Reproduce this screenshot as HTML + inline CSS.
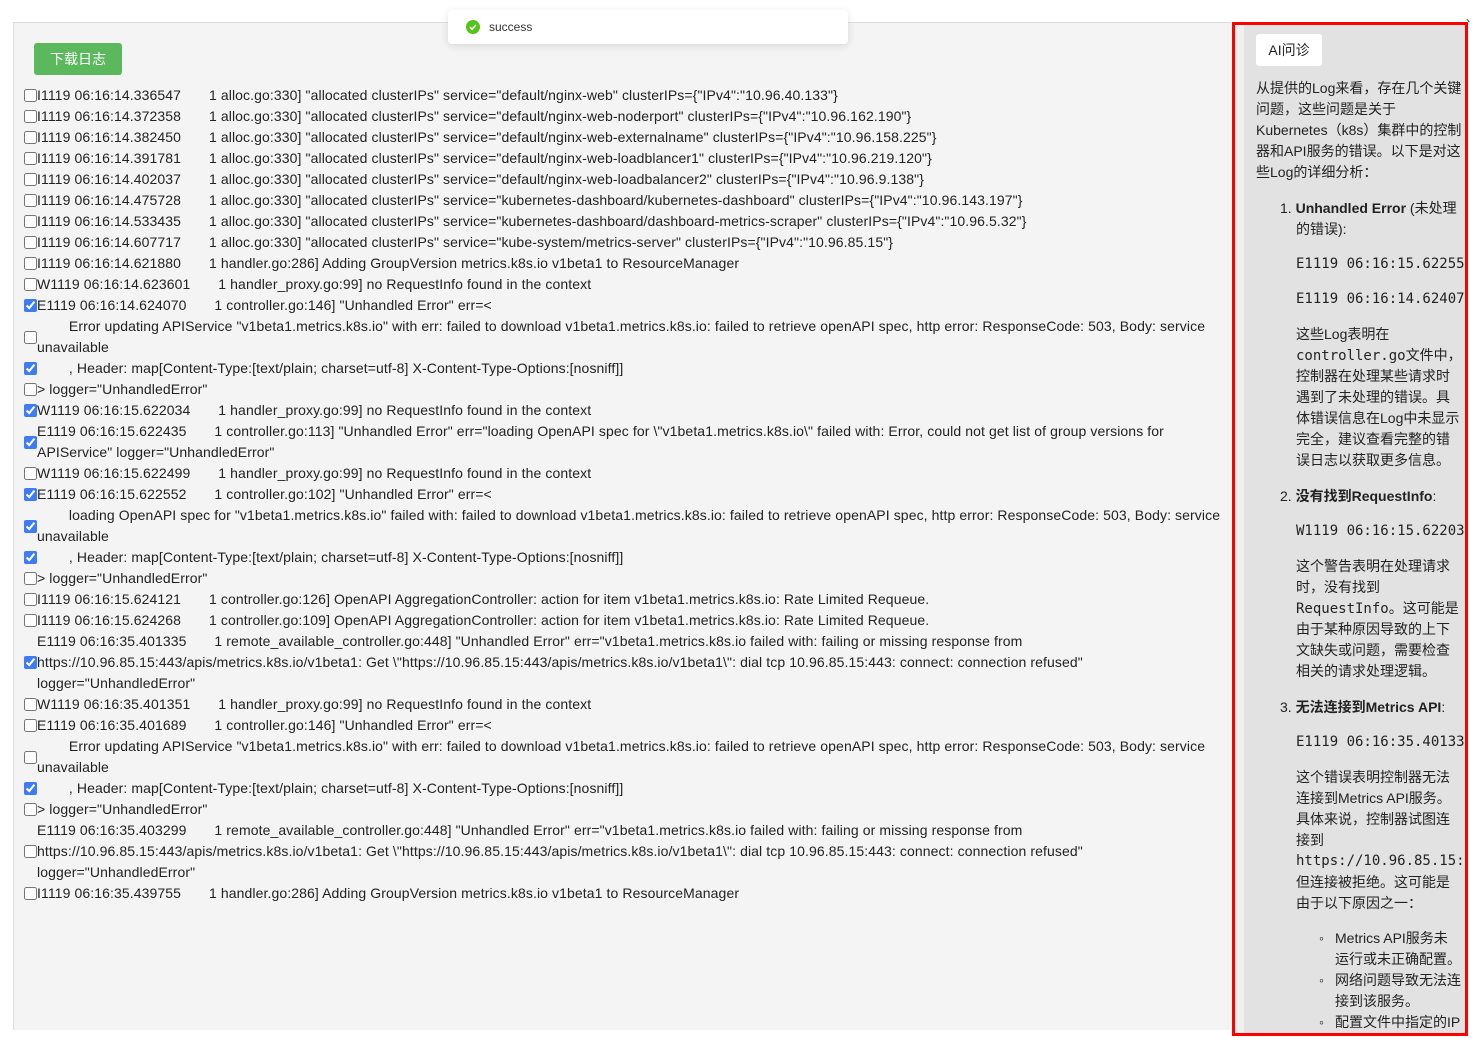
<!DOCTYPE html>
<html><head><meta charset="utf-8"><style>
*{margin:0;padding:0;box-sizing:border-box}
body{width:1475px;height:1038px;background:#fff;position:relative;overflow:hidden;font-family:"Liberation Sans","Noto Sans CJK SC",sans-serif;font-size:14px;color:#222}
#main{position:absolute;left:13px;top:22px;width:1218px;height:1008px;background:#f4f4f4;border-left:1px solid #ddd;border-top:1px solid #ddd}
#btn{position:absolute;left:34px;top:43px;width:88px;height:32px;background:#5cb85c;color:#fff;border-radius:3px;font-size:14px;line-height:32px;text-align:center}
#logs{position:absolute;left:24px;top:85px;width:1200px;letter-spacing:0.1px}
.r{display:flex;align-items:center;line-height:21px;white-space:pre}
.r input{width:13px;height:13px;margin:0;flex:none;accent-color:#3d7cf4}
#toast{position:absolute;left:448px;top:10px;width:400px;height:34px;background:#fff;border-radius:4px;box-shadow:0 2px 8px rgba(0,0,0,.12);font-size:12px;color:#333;line-height:34px;padding-left:41px}
#toast i{position:absolute;left:18px;top:10px;width:14px;height:14px;border-radius:50%;background:#52c41a;display:block}
#toast svg{display:block}
#right{position:absolute;left:1232px;top:22px;width:239px;height:1014px;border:3px solid #f00;background:#e2e2e2;overflow:hidden}
#right .strip{position:absolute;left:0;top:0;width:9px;height:100%;background:#f0f0f0}
#ai{position:absolute;left:21px;top:9px;width:66px;height:32px;background:#fff;border-radius:3px;line-height:32px;text-align:center;font-size:14px}
.l{position:absolute;line-height:21px;white-space:nowrap;font-size:14px}
.m{font-family:"DejaVu Sans Mono","Liberation Mono","Noto Sans CJK SC",monospace;font-size:14px}
</style></head><body>
<div id="main"></div>
<div id="btn">下载日志</div>
<div id="toast"><i><svg width="14" height="14" viewBox="0 0 14 14"><path d="M4 7.2l2 2 4-4.2" stroke="#fff" stroke-width="1.6" fill="none"/></svg></i>success</div>
<div style="position:absolute;left:1466px;top:14px;font-size:12px">›</div>
<div id="logs">
<div class="r"><input type="checkbox"><span>I1119 06:16:14.336547       1 alloc.go:330] "allocated clusterIPs" service="default/nginx-web" clusterIPs={"IPv4":"10.96.40.133"}</span></div>
<div class="r"><input type="checkbox"><span>I1119 06:16:14.372358       1 alloc.go:330] "allocated clusterIPs" service="default/nginx-web-noderport" clusterIPs={"IPv4":"10.96.162.190"}</span></div>
<div class="r"><input type="checkbox"><span>I1119 06:16:14.382450       1 alloc.go:330] "allocated clusterIPs" service="default/nginx-web-externalname" clusterIPs={"IPv4":"10.96.158.225"}</span></div>
<div class="r"><input type="checkbox"><span>I1119 06:16:14.391781       1 alloc.go:330] "allocated clusterIPs" service="default/nginx-web-loadblancer1" clusterIPs={"IPv4":"10.96.219.120"}</span></div>
<div class="r"><input type="checkbox"><span>I1119 06:16:14.402037       1 alloc.go:330] "allocated clusterIPs" service="default/nginx-web-loadbalancer2" clusterIPs={"IPv4":"10.96.9.138"}</span></div>
<div class="r"><input type="checkbox"><span>I1119 06:16:14.475728       1 alloc.go:330] "allocated clusterIPs" service="kubernetes-dashboard/kubernetes-dashboard" clusterIPs={"IPv4":"10.96.143.197"}</span></div>
<div class="r"><input type="checkbox"><span>I1119 06:16:14.533435       1 alloc.go:330] "allocated clusterIPs" service="kubernetes-dashboard/dashboard-metrics-scraper" clusterIPs={"IPv4":"10.96.5.32"}</span></div>
<div class="r"><input type="checkbox"><span>I1119 06:16:14.607717       1 alloc.go:330] "allocated clusterIPs" service="kube-system/metrics-server" clusterIPs={"IPv4":"10.96.85.15"}</span></div>
<div class="r"><input type="checkbox"><span>I1119 06:16:14.621880       1 handler.go:286] Adding GroupVersion metrics.k8s.io v1beta1 to ResourceManager</span></div>
<div class="r"><input type="checkbox"><span>W1119 06:16:14.623601       1 handler_proxy.go:99] no RequestInfo found in the context</span></div>
<div class="r"><input type="checkbox" checked><span>E1119 06:16:14.624070       1 controller.go:146] "Unhandled Error" err=&lt;</span></div>
<div class="r"><input type="checkbox"><span>        Error updating APIService "v1beta1.metrics.k8s.io" with err: failed to download v1beta1.metrics.k8s.io: failed to retrieve openAPI spec, http error: ResponseCode: 503, Body: service<br>unavailable</span></div>
<div class="r"><input type="checkbox" checked><span>        , Header: map[Content-Type:[text/plain; charset=utf-8] X-Content-Type-Options:[nosniff]]</span></div>
<div class="r"><input type="checkbox"><span>&gt; logger="UnhandledError"</span></div>
<div class="r"><input type="checkbox" checked><span>W1119 06:16:15.622034       1 handler_proxy.go:99] no RequestInfo found in the context</span></div>
<div class="r"><input type="checkbox" checked><span>E1119 06:16:15.622435       1 controller.go:113] "Unhandled Error" err="loading OpenAPI spec for \"v1beta1.metrics.k8s.io\" failed with: Error, could not get list of group versions for<br>APIService" logger="UnhandledError"</span></div>
<div class="r"><input type="checkbox"><span>W1119 06:16:15.622499       1 handler_proxy.go:99] no RequestInfo found in the context</span></div>
<div class="r"><input type="checkbox" checked><span>E1119 06:16:15.622552       1 controller.go:102] "Unhandled Error" err=&lt;</span></div>
<div class="r"><input type="checkbox" checked><span>        loading OpenAPI spec for "v1beta1.metrics.k8s.io" failed with: failed to download v1beta1.metrics.k8s.io: failed to retrieve openAPI spec, http error: ResponseCode: 503, Body: service<br>unavailable</span></div>
<div class="r"><input type="checkbox" checked><span>        , Header: map[Content-Type:[text/plain; charset=utf-8] X-Content-Type-Options:[nosniff]]</span></div>
<div class="r"><input type="checkbox"><span>&gt; logger="UnhandledError"</span></div>
<div class="r"><input type="checkbox"><span>I1119 06:16:15.624121       1 controller.go:126] OpenAPI AggregationController: action for item v1beta1.metrics.k8s.io: Rate Limited Requeue.</span></div>
<div class="r"><input type="checkbox"><span>I1119 06:16:15.624268       1 controller.go:109] OpenAPI AggregationController: action for item v1beta1.metrics.k8s.io: Rate Limited Requeue.</span></div>
<div class="r"><input type="checkbox" checked><span>E1119 06:16:35.401335       1 remote_available_controller.go:448] "Unhandled Error" err="v1beta1.metrics.k8s.io failed with: failing or missing response from<br>https://10.96.85.15:443/apis/metrics.k8s.io/v1beta1: Get \"https://10.96.85.15:443/apis/metrics.k8s.io/v1beta1\": dial tcp 10.96.85.15:443: connect: connection refused"<br>logger="UnhandledError"</span></div>
<div class="r"><input type="checkbox"><span>W1119 06:16:35.401351       1 handler_proxy.go:99] no RequestInfo found in the context</span></div>
<div class="r"><input type="checkbox"><span>E1119 06:16:35.401689       1 controller.go:146] "Unhandled Error" err=&lt;</span></div>
<div class="r"><input type="checkbox"><span>        Error updating APIService "v1beta1.metrics.k8s.io" with err: failed to download v1beta1.metrics.k8s.io: failed to retrieve openAPI spec, http error: ResponseCode: 503, Body: service<br>unavailable</span></div>
<div class="r"><input type="checkbox" checked><span>        , Header: map[Content-Type:[text/plain; charset=utf-8] X-Content-Type-Options:[nosniff]]</span></div>
<div class="r"><input type="checkbox"><span>&gt; logger="UnhandledError"</span></div>
<div class="r"><input type="checkbox"><span>E1119 06:16:35.403299       1 remote_available_controller.go:448] "Unhandled Error" err="v1beta1.metrics.k8s.io failed with: failing or missing response from<br>https://10.96.85.15:443/apis/metrics.k8s.io/v1beta1: Get \"https://10.96.85.15:443/apis/metrics.k8s.io/v1beta1\": dial tcp 10.96.85.15:443: connect: connection refused"<br>logger="UnhandledError"</span></div>
<div class="r"><input type="checkbox"><span>I1119 06:16:35.439755       1 handler.go:286] Adding GroupVersion metrics.k8s.io v1beta1 to ResourceManager</span></div>
</div>
<div id="right"><div class="strip"></div><div id="ai">AI问诊</div></div>
<div style="position:absolute;left:0;top:0;">
<div class="l" style="left:1256px;top:78px">从提供的Log来看，存在几个关键</div>
<div class="l" style="left:1256px;top:99px">问题，这些问题是关于</div>
<div class="l" style="left:1256px;top:120px">Kubernetes（k8s）集群中的控制</div>
<div class="l" style="left:1256px;top:141px">器和API服务的错误。以下是对这</div>
<div class="l" style="left:1256px;top:162px">些Log的详细分析：</div>
<div class="l" style="left:1280px;top:198px">1. <b>Unhandled Error</b> (未处理</div>
<div class="l" style="left:1296px;top:219px">的错误):</div>
<div class="l m" style="left:1296px;top:254px">E1119 06:16:15.622552</div>
<div class="l m" style="left:1296px;top:289px">E1119 06:16:14.624070</div>
<div class="l" style="left:1296px;top:324px">这些Log表明在</div>
<div class="l" style="left:1296px;top:345px"><span class="m">controller.go</span>文件中，</div>
<div class="l" style="left:1296px;top:366px">控制器在处理某些请求时</div>
<div class="l" style="left:1296px;top:387px">遇到了未处理的错误。具</div>
<div class="l" style="left:1296px;top:408px">体错误信息在Log中未显示</div>
<div class="l" style="left:1296px;top:429px">完全，建议查看完整的错</div>
<div class="l" style="left:1296px;top:450px">误日志以获取更多信息。</div>
<div class="l" style="left:1280px;top:486px">2. <b>没有找到RequestInfo</b>:</div>
<div class="l m" style="left:1296px;top:521px">W1119 06:16:15.622034</div>
<div class="l" style="left:1296px;top:556px">这个警告表明在处理请求</div>
<div class="l" style="left:1296px;top:577px">时，没有找到</div>
<div class="l" style="left:1296px;top:598px"><span class="m">RequestInfo</span>。这可能是</div>
<div class="l" style="left:1296px;top:619px">由于某种原因导致的上下</div>
<div class="l" style="left:1296px;top:640px">文缺失或问题，需要检查</div>
<div class="l" style="left:1296px;top:661px">相关的请求处理逻辑。</div>
<div class="l" style="left:1280px;top:697px">3. <b>无法连接到Metrics API</b>:</div>
<div class="l m" style="left:1296px;top:732px">E1119 06:16:35.401335</div>
<div class="l" style="left:1296px;top:767px">这个错误表明控制器无法</div>
<div class="l" style="left:1296px;top:788px">连接到Metrics API服务。</div>
<div class="l" style="left:1296px;top:809px">具体来说，控制器试图连</div>
<div class="l" style="left:1296px;top:830px">接到</div>
<div class="l m" style="left:1296px;top:851px">https://10.96.85.15:443</div>
<div class="l" style="left:1296px;top:872px">但连接被拒绝。这可能是</div>
<div class="l" style="left:1296px;top:893px">由于以下原因之一：</div>
<div class="l" style="left:1319px;top:928px">◦</div><div class="l" style="left:1335px;top:928px">Metrics API服务未</div>
<div class="l" style="left:1335px;top:949px">运行或未正确配置。</div>
<div class="l" style="left:1319px;top:970px">◦</div><div class="l" style="left:1335px;top:970px">网络问题导致无法连</div>
<div class="l" style="left:1335px;top:991px">接到该服务。</div>
<div class="l" style="left:1319px;top:1012px">◦</div><div class="l" style="left:1335px;top:1012px">配置文件中指定的IP</div>
</div>
<div style="position:absolute;left:1468px;top:22px;width:7px;height:1016px;background:#fff"></div>
<div style="position:absolute;left:1465px;top:22px;width:3px;height:1014px;background:#f00"></div>
<div style="position:absolute;left:1232px;top:1033px;width:236px;height:3px;background:#f00"></div>
</body></html>
